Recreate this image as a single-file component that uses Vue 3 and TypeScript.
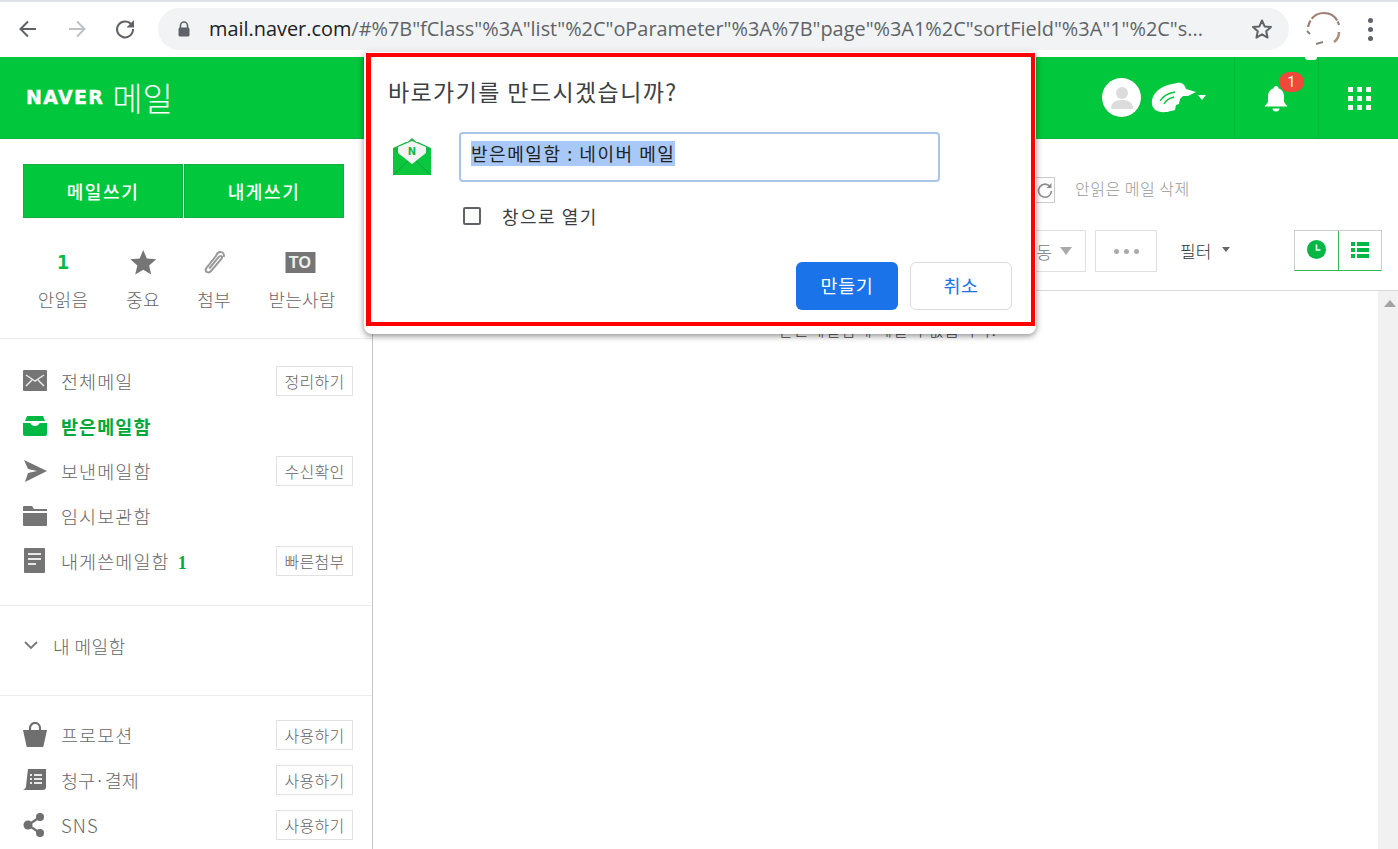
<script setup lang="ts">
interface NavRow { key: string; label: string; action?: string; count?: string; active?: boolean }
const navRows: NavRow[] = [
  { key: 'all', label: '전체메일', action: '정리하기' },
  { key: 'inbox', label: '받은메일함', active: true },
  { key: 'sent', label: '보낸메일함', action: '수신확인' },
  { key: 'draft', label: '임시보관함' },
  { key: 'self', label: '내게쓴메일함', count: '1', action: '빠른첨부' },
]
const extraRows: NavRow[] = [
  { key: 'promo', label: '프로모션', action: '사용하기' },
  { key: 'bill', label: '청구·결제', action: '사용하기' },
  { key: 'sns', label: 'SNS', action: '사용하기' },
]
const host = 'mail.naver.com'
const path = '/#%7B"fClass"%3A"list"%2C"oParameter"%3A%7B"page"%3A1%2C"sortField"%3A"1"%2C"s...'
</script>

<template>
  <div class="app">
    <div class="chrome">
      <svg class="cicon" width="24" height="24" viewBox="0 0 24 24"><path d="M20 12H5M12 4.500 4.500 12l7.500 7.500" fill="none" stroke="#5f6368" stroke-width="2"/></svg>
      <svg class="cicon fwd" width="24" height="24" viewBox="0 0 24 24"><path d="M4 12h15M12 4.500 19.500 12 12 19.500" fill="none" stroke="#bdc1c6" stroke-width="2"/></svg>
      <svg class="cicon rel" width="24" height="24" viewBox="0 0 24 24"><path d="M19 8.500A8 8 0 1 0 20 12" fill="none" stroke="#5f6368" stroke-width="2"/><path d="M21 3v7.500h-7.500z" fill="#5f6368"/></svg>
      <div class="omni">
        <svg width="14" height="18" viewBox="0 0 14 18"><path d="M3.500 8V5.500a3.500 3.500 0 0 1 7 0V8" fill="none" stroke="#5f6368" stroke-width="1.600"/><rect x="1.500" y="7.500" width="11" height="9" rx="1.500" fill="#5f6368"/></svg>
        <span class="url"><span class="host">{{ host }}</span>{{ path }}</span>
        <svg class="star" width="24" height="24" viewBox="0 0 24 24"><path d="M12 3.500l2.600 5.900 6.400.6-4.800 4.300 1.400 6.300L12 17.300l-5.600 3.300 1.400-6.300L3 10l6.400-.6z" fill="none" stroke="#5f6368" stroke-width="2" stroke-linejoin="round"/></svg>
      </div>
      <svg class="ring" width="36" height="36" viewBox="0 0 36 36"><path d="M2 16C4 7 10 2 18 2c8 0 13 5 15 12" fill="none" stroke="#9c7f74" stroke-width="2.200" stroke-dasharray="7 2 30 1"/><path d="M33 21c0 4-2 8-5 10" fill="none" stroke="#a98f7e" stroke-width="2.600"/><path d="M10 33l7-2" stroke="#8f8278" stroke-width="2"/><path d="M1 20l3 3" stroke="#8a8078" stroke-width="2"/></svg>
      <div class="kebab"><i></i><i></i><i></i></div>
    </div>

    <header class="header">
      <div class="logo"><span class="naver">NAVER</span><span class="mail">메일</span></div>
      <div class="user">
        <span class="avatar"><svg width="24" height="24" viewBox="0 0 24 24"><circle cx="12" cy="8" r="6" fill="#dcdcdc"/><path d="M1 24c0-7 5-9 11-9s11 2 11 9z" fill="#dcdcdc"/></svg></span>
        <svg class="scribble" width="46" height="32" viewBox="0 0 46 32"><path d="M1 18C3 8 13 3 26 1c5-1 8 2 9 6l10 3-8 4-5 0-3 3-1 5-3 1-1 5-8 2C4 31 0 26 1 18z" fill="#fff"/><path d="M9 19c3-5 9-8 15-9M13 22c2-4 6-6 10-7" fill="none" stroke="#00c73c" stroke-width="1.300"/></svg>
        <span class="caret"></span>
      </div>
      <div class="bell-cell">
        <svg width="24" height="27" viewBox="0 0 24 27"><path d="M12 1c1.500 0 2.500 1 2.500 2.300C18 4.500 20 7.500 20 11v6l3.500 4.500H.5L4 17v-6c0-3.500 2-6.500 5.500-7.700C9.500 2 10.500 1 12 1z" fill="#fff"/><path d="M8.500 23.500h7c0 2-1.500 3-3.500 3s-3.500-1-3.500-3z" fill="#fff"/></svg>
        <span class="badge">1</span>
      </div>
      <div class="grid-cell"><span class="dots"><i v-for="n in 9" :key="n"></i></span></div>
      <span class="nub"></span>
    </header>

    <div class="body">
      <aside class="side">
        <div class="compose">
          <button class="cbtn">메일쓰기</button>
          <button class="cbtn">내게쓰기</button>
        </div>
        <div class="quick">
          <div class="q q1"><span class="qi num">1</span><span>안읽음</span></div>
          <div class="q q2"><span class="qi"><svg width="26" height="25" viewBox="0 0 26 25"><path d="M13 0l3.600 8.500 9.400.8-7.100 6.100 2.100 9.100L13 19.700 5 24.500l2.100-9.100L0 9.300l9.400-.8z" fill="#757575"/></svg></span><span>중요</span></div>
          <div class="q q3"><span class="qi"><svg width="24" height="24" viewBox="0 0 24 24"><path d="M8 17.500 17.500 6c1.500-2 4-1 3 1.500L9.800 20c-2.300 2.800-6.500 1-5-2.500L15 4.500C17-1 24 .5 22.500 6" fill="none" stroke="#9a9a9a" stroke-width="2" transform="translate(-1 1)"/></svg></span><span>첨부</span></div>
          <div class="q q4"><span class="qi"><span class="to">TO</span></span><span>받는사람</span></div>
        </div>
        <hr class="rule" />
        <ul class="nav first">
          <li v-for="r in navRows" :key="r.key" class="row" :class="{ active: r.active }">
            <span class="ico">
              <svg v-if="r.key === 'all'" width="24" height="21" viewBox="0 0 24 21"><rect width="24" height="21" rx="1" fill="#757575"/><path d="M3 5l9 6 9-6M3 16l6-6M21 16l-6-6" fill="none" stroke="#e8e8e8" stroke-width="1.500"/></svg>
              <svg v-else-if="r.key === 'inbox'" width="24" height="20" viewBox="0 0 24 20"><path d="M4 0h16l2 5H2z" fill="#00b843"/><path d="M0 7h7c1 0 1 3 5 3s4-3 5-3h7v11a2 2 0 0 1-2 2H2a2 2 0 0 1-2-2z" fill="#00b843"/></svg>
              <svg v-else-if="r.key === 'sent'" width="24" height="24" viewBox="0 0 24 24"><path d="M1 1l23 11L2 23l3-9 9-2-9-2z" fill="#757575"/></svg>
              <svg v-else-if="r.key === 'draft'" width="24" height="22" viewBox="0 0 24 22"><path d="M0 2a1 1 0 0 1 1-1h8l2 3h13v2H0z" fill="#757575"/><path d="M0 8h24v12a1 1 0 0 1-1 1H1a1 1 0 0 1-1-1z" fill="#757575"/></svg>
              <svg v-else width="22" height="25" viewBox="0 0 22 25"><rect width="21" height="25" rx="1" x="1" fill="#757575"/><path d="M5 6h13M5 11h13M5 16h8" stroke="#e8e8e8" stroke-width="1.800"/></svg>
            </span>
            <span class="lbl">{{ r.label }}<b v-if="r.count" class="cnt">{{ r.count }}</b></span>
            <button v-if="r.action" class="act">{{ r.action }}</button>
          </li>
        </ul>
        <hr class="rule" />
        <div class="mybox">
          <svg width="14" height="9" viewBox="0 0 14 9"><path d="M1 1l6 6 6-6" fill="none" stroke="#777" stroke-width="1.800"/></svg>
          <span>내 메일함</span>
        </div>
        <hr class="rule" />
        <ul class="nav second">
          <li v-for="r in extraRows" :key="r.key" class="row">
            <span class="ico">
              <svg v-if="r.key === 'promo'" width="24" height="25" viewBox="0 0 24 25"><path d="M7 9V6a5 5 0 0 1 10 0v3" fill="none" stroke="#6f6f6f" stroke-width="2.200"/><path d="M0 8h24l-3.500 16a1 1 0 0 1-1 1h-15a1 1 0 0 1-1-1z" fill="#6f6f6f"/></svg>
              <svg v-else-if="r.key === 'bill'" width="24" height="23" viewBox="0 0 24 23"><path d="M5 1h18v19a3 3 0 0 1-3 2H0c2-1 3-2 3-4z" fill="#6f6f6f"/><path d="M7 7h2M11 7h8M7 11h2M11 11h8M7 15h2M11 15h8" stroke="#e8e8e8" stroke-width="1.800"/></svg>
              <svg v-else width="22" height="26" viewBox="0 0 22 26"><path d="M17 5 5 13l12 8" fill="none" stroke="#6f6f6f" stroke-width="2.200"/><circle cx="17" cy="5" r="4" fill="#6f6f6f"/><circle cx="5" cy="13" r="4.500" fill="#6f6f6f"/><circle cx="17" cy="21" r="4" fill="#6f6f6f"/></svg>
            </span>
            <span class="lbl" :class="r.key">{{ r.label }}</span>
            <button class="act">{{ r.action }}</button>
          </li>
        </ul>
      </aside>

      <main class="main">
        <div class="tool1">
          <span class="refresh"><svg width="18" height="18" viewBox="0 0 18 18"><path d="M14 5.500A6.500 6.500 0 1 0 15.500 10" fill="none" stroke="#8c8c8c" stroke-width="1.600"/><path d="M15.500 2v5h-5z" fill="#8c8c8c"/></svg></span>
          <span class="del">안읽은 메일 삭제</span>
        </div>
        <div class="tool2">
          <button class="tbtn move">이동<span class="tri"></span></button>
          <button class="tbtn more"><i></i><i></i><i></i></button>
          <span class="filter">필터<span class="tri dark"></span></span>
          <div class="views">
            <span class="view"><svg width="19" height="19" viewBox="0 0 19 19"><circle cx="9.500" cy="9.500" r="9.500" fill="#00b843"/><path d="M9.500 4.500v5.500h4" fill="none" stroke="#fff" stroke-width="1.600"/></svg></span>
            <span class="view"><svg width="18" height="16" viewBox="0 0 18 16"><path d="M0 0h4v4H0zM6 0h12v4H6zM0 6h4v4H0zM6 6h12v4H6zM0 12h4v4H0zM6 12h12v4H6z" fill="#00b843"/></svg></span>
          </div>
        </div>
        <div class="list">
          <div class="listbody"><p class="empty">받은메일함에 메일이 없습니다.</p></div>
          <div class="scroll"><span class="up"></span></div>
        </div>
      </main>
    </div>

    <div class="dialog">
      <div class="frame">
        <h2 class="title">바로가기를 만드시겠습니까?</h2>
        <div class="form">
          <svg class="env" width="38" height="38" viewBox="0 0 38 38">
            <path d="M13 5.500 19 0l6 5.500z" fill="#22b14c"/>
            <path d="M0 10 13 4h12l13 6v8H0z" fill="#13b845"/>
            <path d="M5 9 19 3l14 6v14H5z" fill="#f3f3f3"/>
            <path d="M0 11l19 15 19-15v26H0z" fill="#0cc63e"/>
            <path d="M0 37l15-14M38 37 23 23" stroke="#0aa838" stroke-width="1"/>
            <text x="19" y="17" text-anchor="middle" class="envn">N</text>
          </svg>
          <div class="field"><span class="sel">받은메일함 : 네이버 메일</span></div>
        </div>
        <label class="check"><span class="box"></span><span>창으로 열기</span></label>
        <div class="actions">
          <button class="primary">만들기</button>
          <button class="secondary">취소</button>
        </div>
      </div>
    </div>
  </div>
</template>

<style>
html, body { margin: 0; background: #fff; }
</style>

<style scoped>
.app { position: relative; width: 1398px; height: 849px; overflow: hidden; display: flex; flex-direction: column; font-family: "Noto Sans CJK KR", sans-serif; background: #fff; }
button { font-family: inherit; cursor: default; }
.chrome { flex: none; height: 57px; box-sizing: border-box; border-top: 2px solid #dee1e6; display: flex; align-items: center; padding: 0 0 1px 16px; background: #fff; position: relative; }
.cicon { flex: none; }
.fwd { margin-left: 25px; }
.rel { margin-left: 24px; }
.omni { flex: none; width: 1131px; height: 42px; margin-left: 21px; border-radius: 21px; background: #f1f3f4; display: flex; align-items: center; box-sizing: border-box; padding: 0 15px 0 19px; }
.url { margin-left: 18px; flex: 1; font: 400 19.900px/42px "Open Sans", sans-serif; color: #5f6368; white-space: nowrap; overflow: hidden; }
.host { color: #202124; }
.star { flex: none; }
.ring { flex: none; margin-left: 17px; }
.kebab { margin-left: 26px; display: flex; flex-direction: column; gap: 4px; }
.kebab i { width: 5px; height: 5px; border-radius: 50%; background: #5f6368; }

.header { position: relative; flex: none; height: 82px; box-sizing: border-box; background: #00c73c; border-bottom: 1px solid #06b53a; display: flex; align-items: stretch; }
.nub { position: absolute; left: 1305px; top: 0; width: 12px; height: 3px; background: #fff; border-radius: 0 0 6px 6px; }
.logo { flex: 1; display: flex; align-items: center; padding-left: 26px; color: #fff; }
.naver { font: 700 19px/1 "DejaVu Sans", sans-serif; letter-spacing: 1.300px; -webkit-text-stroke: .4px #fff; }
.mail { font-weight: 300; font-size: 33px; line-height: 1; margin-left: 8px; }
.user { display: flex; align-items: center; padding-right: 28px; }
.avatar { width: 39px; height: 39px; border-radius: 50%; background: #fff; display: flex; align-items: flex-end; justify-content: center; box-sizing: border-box; padding-bottom: 8px; box-shadow: 0 0 1px #0a9a35; }
.scribble { margin-left: 10px; }
.caret { margin-left: 1px; margin-bottom: 1px; border: 4px solid transparent; border-top: 5px solid #fff; border-bottom: 0; }
.bell-cell { position: relative; width: 84px; border-left: 1px solid #07b83a; display: flex; align-items: center; justify-content: center; box-sizing: border-box; padding: 1px 2px 0 0; }
.badge { position: absolute; left: 44px; top: 15px; width: 25px; height: 20px; border-radius: 10px; background: #f0483a; color: #fff; font: 400 14px/20px "Roboto", sans-serif; text-align: center; }
.grid-cell { width: 80px; border-left: 1px solid #07b83a; display: flex; align-items: center; padding: 1px 0 0 29px; box-sizing: border-box; }
.dots { display: grid; grid-template-columns: repeat(3, 5px); gap: 4px; }
.dots i { width: 5px; height: 5px; background: #fff; opacity: .95; }

.body { flex: 1; display: flex; min-height: 0; }
.side { flex: none; width: 373px; box-sizing: border-box; border-right: 1px solid #c6c6c6; display: flex; flex-direction: column; }
.compose { flex: none; display: flex; gap: 0; margin: 25px 28px 0 23px; height: 54px; }
.cbtn { flex: 1; height: 54px; background: #00c73c; border: 1px solid #12ae45; border-radius: 0; color: #fff; font-size: 18px; font-weight: 500; padding: 0; letter-spacing: 1.600px; }
.cbtn + .cbtn { margin-left: 1px; }
.quick { flex: none; position: relative; height: 120px; }
.q { position: absolute; top: 28px; transform: translateX(-50%); display: flex; flex-direction: column; align-items: center; color: #666; font-size: 18px; font-weight: 300; white-space: nowrap; letter-spacing: .2px; }
.q1 { left: 63px; } .q2 { left: 143px; } .q3 { left: 214px; } .q4 { left: 302px; }
.qi { height: 32px; display: flex; align-items: center; margin-bottom: 8px; }
.num { color: #00b843; font: 700 20px/32px "DejaVu Sans Mono", monospace; }
.to { display: block; width: 30px; height: 21px; margin-right: 4px; background: #757575; color: #eee; font: 700 16px/21px "Liberation Sans", sans-serif; text-align: center; }
.rule { flex: none; margin: 0; border: 0; height: 1px; background: #ececec; }
.nav { flex: none; list-style: none; margin: 0; padding: 0; }
.first { padding: 19px 19px 22px 23px; }
.second { padding: 16px 19px 0 23px; }
.row { height: 45px; display: flex; align-items: center; color: #666; font-size: 18.500px; font-weight: 300; }
.row.active { color: #00a83c; font-weight: 700; }
.ico { flex: none; width: 38px; display: flex; align-items: center; }
.lbl { flex: 1; white-space: nowrap; letter-spacing: 1.100px; }
.lbl.bill { letter-spacing: -.1px; }
.cnt { margin-left: 8px; font: 700 18px "Liberation Serif", serif; color: #00a83c; }
.act { flex: none; width: 77px; height: 30px; background: #fff; border: 1px solid #e2e2e2; color: #666; font-size: 16px; font-weight: 300; letter-spacing: .3px; padding: 0; white-space: nowrap; }
.mybox { flex: none; height: 89px; display: flex; align-items: center; padding: 0 0 10px 24px; gap: 15px; color: #666; font-size: 18px; font-weight: 300; letter-spacing: .5px; box-sizing: border-box; }

.main { flex: 1; min-width: 0; display: flex; flex-direction: column; }
.tool1 { height: 90px; flex: none; box-sizing: border-box; padding: 38px 0 0 662px; display: flex; align-items: flex-start; color: #999; font-size: 16px; font-weight: 300; letter-spacing: .5px; }
.refresh { width: 19px; height: 24px; border: 1px solid #ccc; border-left: 0; display: flex; align-items: center; justify-content: center; }
.del { margin-left: 20px; line-height: 22px; }
.tool2 { height: 62px; flex: none; box-sizing: border-box; padding: 1px 16px 0 0; display: flex; align-items: flex-start; justify-content: flex-end; border-bottom: 1px solid #d9d9d9; }
.tbtn { height: 42px; box-sizing: border-box; background: #fff; border: 1px solid #e0e0e0; padding: 0; display: flex; align-items: center; justify-content: center; color: #777; font-size: 17px; font-weight: 300; }
.move { width: 120px; gap: 8px; justify-content: flex-end; padding-right: 13px; }
.more { width: 62px; margin-left: 9px; gap: 5px; }
.more i { width: 5px; height: 5px; border-radius: 50%; background: #aaa; }
.tri { display: inline-block; border: 6px solid transparent; border-top: 8px solid #aaa; border-bottom: 0; }
.tri.dark { border-width: 5px 4px 0; border-top-color: #666; margin: 0 0 3px 11px; }
.filter { width: 137px; box-sizing: border-box; padding-left: 23px; color: #333; font-size: 17px; font-weight: 300; line-height: 42px; display: flex; align-items: center; }
.views { display: flex; height: 41px; box-sizing: border-box; border: 1px solid #ccc; border-bottom: 1px solid #34b95a; }
.view { width: 43px; display: flex; align-items: center; justify-content: center; box-sizing: border-box; padding-bottom: 2px; }
.view + .view { width: 43px; border-left: 1px solid #34b95a; }
.list { flex: 1; display: flex; min-height: 0; }
.listbody { flex: 1; display: flex; justify-content: center; padding-left: 24px; }
.empty { margin: 26px 0 0; font-size: 16px; color: #444; font-weight: 300; line-height: 24px; letter-spacing: 1px; }
.scroll { flex: none; width: 20px; background: #f1f1f1; display: flex; justify-content: center; align-items: flex-start; padding-top: 9px; box-sizing: border-box; }
.up { display: block; width: 0; height: 0; margin-left: 4px; border-left: 6px solid transparent; border-right: 6px solid transparent; border-bottom: 7px solid #a3a3a3; }

.dialog { position: absolute; left: 364px; top: 52px; width: 672px; height: 282px; box-sizing: border-box; padding: 1px 1px 8px 2px; background: #fff; border-radius: 4px 4px 8px 8px; box-shadow: 0 2px 6px rgba(0,0,0,.45); }
.frame { height: 100%; box-sizing: border-box; border: 5px solid #f00; border-width: 4px 4px 4px 5px; padding: 0 19px 0 17px; display: flex; flex-direction: column; }
.title { margin: 18px 0 0; font-size: 23px; font-weight: 400; letter-spacing: 1.400px; line-height: 32px; color: #3c4043; white-space: nowrap; }
.form { display: flex; align-items: flex-start; margin-top: 25px; }
.env { flex: none; margin: 6px 28px 0 5px; }
.envn { font: 900 10px "DejaVu Sans", sans-serif; fill: #14b848; }
.field { width: 481px; height: 50px; box-sizing: border-box; border: 2px solid #a9c6e8; border-radius: 4px; padding: 7px 0 0 10px; display: flex; align-items: flex-start; }
.sel { background: #a8c8f8; color: #222; font-size: 18px; line-height: 25px; letter-spacing: 1.550px; white-space: nowrap; }
.check { display: flex; align-items: center; margin: 23px 0 0 75px; font-size: 18px; line-height: 22px; color: #3c4043; letter-spacing: 1.500px; }
.box { width: 18px; height: 18px; box-sizing: border-box; border: 2px solid #5f6368; border-radius: 2px; margin-right: 21px; }
.actions { display: flex; justify-content: flex-end; gap: 12px; margin-top: 35px; }
.primary, .secondary { width: 102px; height: 48px; border-radius: 6px; font-size: 18.500px; letter-spacing: .6px; padding: 0 0 2px; }
.primary { background: #1a73e8; border: 0; color: #fff; }
.secondary { background: #fff; border: 1px solid #dadce0; color: #1a73e8; }
</style>
